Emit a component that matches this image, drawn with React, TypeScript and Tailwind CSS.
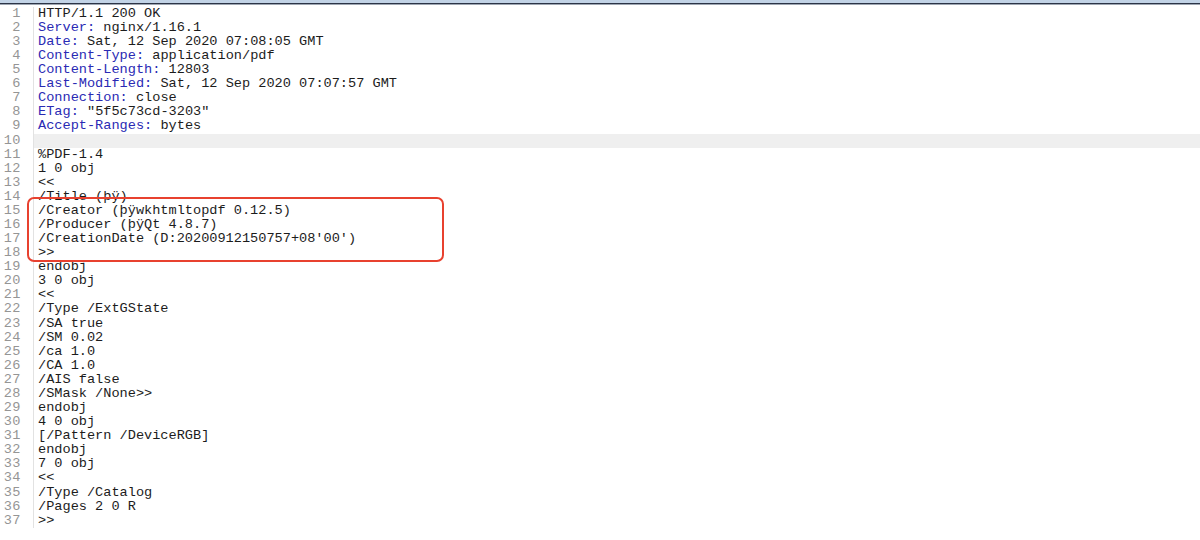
const headers: [string, string][] = [
  ['', 'HTTP/1.1 200 OK'],
  ['Server', 'nginx/1.16.1'],
  ['Date', 'Sat, 12 Sep 2020 07:08:05 GMT'],
  ['Content-Type', 'application/pdf'],
  ['Content-Length', '12803'],
  ['Last-Modified', 'Sat, 12 Sep 2020 07:07:57 GMT'],
  ['Connection', 'close'],
  ['ETag', '"5f5c73cd-3203"'],
  ['Accept-Ranges', 'bytes'],
];

const body = [
  '%PDF-1.4',
  '1 0 obj',
  '<<',
  '/Title (\u00fe\u00ff)',
  '/Creator (\u00fe\u00ffwkhtmltopdf 0.12.5)',
  '/Producer (\u00fe\u00ffQt 4.8.7)',
  "/CreationDate (D:20200912150757+08'00')",
  '>>',
  'endobj',
  '3 0 obj',
  '<<',
  '/Type /ExtGState',
  '/SA true',
  '/SM 0.02',
  '/ca 1.0',
  '/CA 1.0',
  '/AIS false',
  '/SMask /None>>',
  'endobj',
  '4 0 obj',
  '[/Pattern /DeviceRGB]',
  'endobj',
  '7 0 obj',
  '<<',
  '/Type /Catalog',
  '/Pages 2 0 R',
  '>>',
];

function Row({ n, active, children }: { n: number; active?: boolean; children?: React.ReactNode }) {
  return (
    <div className="flex h-[14.08px] items-center">
      <div className="w-[33px] shrink-0 pr-[12px] text-right text-[13.6px] tracking-[0.5px] text-[#959595]">{n}</div>
      <div className={`flex-1 self-stretch border-l border-[#e2e2e2] pl-[4px] flex items-center whitespace-pre ${active ? 'bg-[#efefef]' : ''}`}>
        {children}
      </div>
    </div>
  );
}

export default function App() {
  return (
    <div className="relative h-[540px] w-[1200px] overflow-hidden bg-white font-['Liberation_Mono','DejaVu_Sans_Mono',monospace] text-[13.6px] text-[#1c1c1c]">
      <div className="h-[3px] bg-[#c2d3e6]" />
      <div className="h-[1px] bg-[#2c3446]" />
      <div className="h-[1px] bg-[#9ea6b2]" />
      <div className="h-[2px]" />
      {headers.map(([k, v], i) => (
        <Row key={i} n={i + 1}>
          {k ? (
            <>
              <span className="text-[#2a2ab4]">{k}:</span>
              <span> {v}</span>
            </>
          ) : (
            <span>{v}</span>
          )}
        </Row>
      ))}
      <Row n={10} active />
      {body.map((line, i) => (
        <Row key={i} n={i + 11}>
          {line}
        </Row>
      ))}
      <div className="absolute left-[27px] top-[197px] h-[65px] w-[417px] rounded-[7px] border-[2.5px] border-[#e8412f]" />
    </div>
  );
}
